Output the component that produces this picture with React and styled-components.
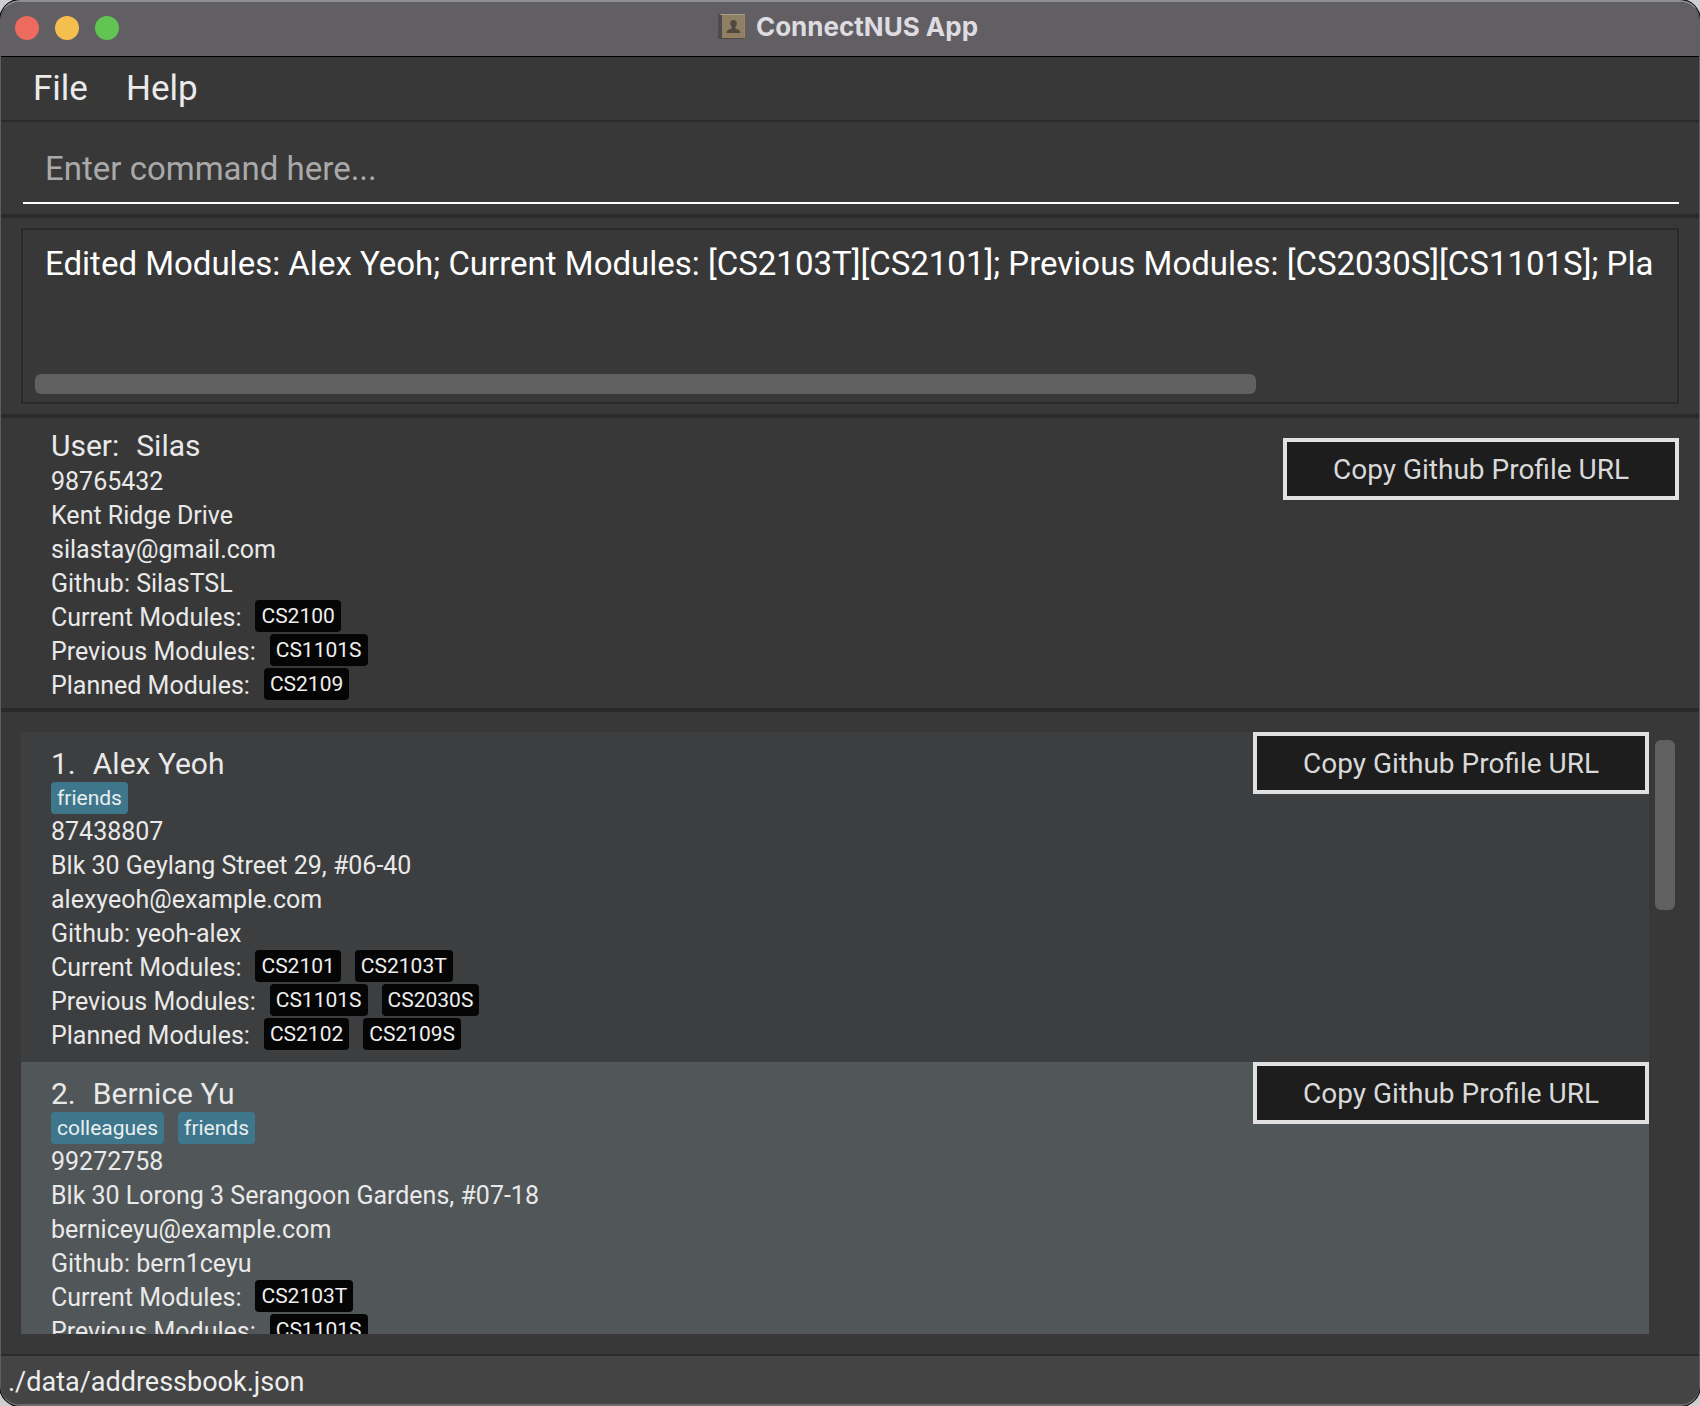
import React from "react";
import styled, { createGlobalStyle } from "styled-components";

const GlobalStyle = createGlobalStyle`
  *, *::before, *::after { box-sizing: border-box; }
  body {
    margin: 0;
    background: #cfcfcf;
    color: #e9e9e9;
    font-family: Roboto, "Liberation Sans", sans-serif;
  }
  button, input, textarea { font-family: inherit; margin: 0; }
`;

const Window = styled.div`
  display: flex;
  flex-direction: column;
  height: 100vh;
  overflow: hidden;
  background: #383838;
  border: 1px solid #5e5e5e;
  border-top: 2px solid #8f8e94;
  border-bottom: 2px solid #6c6c6c;
  border-radius: 20px;
  box-shadow: 0 0 0 1px #000;
`;

const TitleBar = styled.header`
  display: grid;
  grid-template-columns: 1fr auto 1fr;
  align-items: center;
  flex: none;
  height: 55px;
  padding: 0 14px 2px;
  background: #615f64;
  border-bottom: 1px solid #000;
`;

const Lights = styled.div`
  display: flex;
  gap: 16px;
`;

const Light = styled.button`
  width: 24px;
  height: 24px;
  padding: 0;
  border: 0;
  border-radius: 50%;
  background: ${(p) => p.$color};
`;

const Title = styled.h1`
  display: flex;
  align-items: center;
  gap: 10px;
  margin: 0;
  padding: 0 4px 2px 0;
  color: #dedce0;
  font: 700 26px/32px Inter, sans-serif;
`;

const MenuBar = styled.nav`
  display: flex;
  align-items: center;
  gap: 38px;
  flex: none;
  height: 65px;
  padding: 0 32px;
  border-bottom: 2px solid #2a2a2a;
`;

const MenuButton = styled.button`
  padding: 0;
  border: 0;
  background: none;
  color: #ebebeb;
  font-size: 35px;
  line-height: 42px;
`;

const CommandBox = styled.form`
  flex: none;
  padding: 0 20px 10px 22px;
  border-bottom: 4px solid #2a2a2a;
`;

const CommandInput = styled.input`
  display: block;
  width: 100%;
  height: 82px;
  padding: 12px 22px 0;
  border: 0;
  border-bottom: 2px solid #fff;
  border-radius: 0;
  outline: 0;
  background: none;
  color: #fff;
  font-size: 33px;
  &::placeholder { color: #a9a9a9; opacity: 1; }
`;

const ResultPane = styled.section`
  flex: none;
  padding: 10px 20px;
  border-bottom: 4px solid #2a2a2a;
`;

const ResultBox = styled.div`
  display: flex;
  flex-direction: column;
  height: 176px;
  border: 2px solid #2a2a2a;
`;

const ResultText = styled.textarea`
  flex: 1;
  width: 100%;
  min-height: 0;
  padding: 10px 0 0 22px;
  border: 0;
  outline: 0;
  resize: none;
  overflow: hidden;
  white-space: pre;
  background: none;
  color: #fff;
  font-size: 33px;
  line-height: 48px;
`;

const HorizontalTrack = styled.div`
  flex: none;
  height: 28px;
  padding: 0 14px 8px 12px;
`;

const VerticalTrack = styled.div`
  flex: none;
  width: 20px;
  padding: 8px 0;
`;

const Thumb = styled.div`
  width: ${(p) => p.$width || "100%"};
  height: ${(p) => p.$height || "100%"};
  border-radius: 6px;
  background: #606060;
`;

const UserPane = styled.section`
  display: flex;
  justify-content: space-between;
  align-items: flex-start;
  flex: none;
  padding: 0 20px 0 50px;
  border-bottom: 4px solid #2a2a2a;
  & > button { margin-top: 20px; }
`;

const Details = styled.div`
  min-width: 0;
  padding: ${(p) => p.$pad} 0;
`;

const Name = styled.h2`
  display: flex;
  gap: 17px;
  margin: 0;
  padding-top: 4px;
  font-weight: 400;
  font-size: 30px;
  line-height: 36px;
`;

const Line = styled.div`
  display: flex;
  gap: 14px;
  height: 34px;
  font-size: 25px;
  line-height: 36px;
  white-space: nowrap;
`;

const Tags = styled.div`
  display: flex;
  gap: 14px;
`;

const Tag = styled.span`
  height: 32px;
  padding: 0 6px;
  border-radius: 4px;
  background: #3e768b;
  color: #e9eef0;
  font-size: 21px;
  line-height: 33px;
`;

const ModuleTag = styled(Tag)`
  background: #050505;
  color: #efefef;
`;

const CopyButton = styled.button`
  flex: none;
  width: 396px;
  height: 62px;
  padding: 0;
  border: 4px solid #e1e1e1;
  border-radius: 0;
  background: #1d1d1d;
  color: #d9d9d9;
  font-size: 28px;
`;

const ListPane = styled.main`
  display: flex;
  gap: 6px;
  flex: 1;
  min-height: 0;
  padding: 20px 24px 20px 20px;
`;

const CardList = styled.ul`
  flex: 1;
  min-width: 0;
  margin: 0;
  padding: 0;
  overflow: hidden;
  list-style: none;
`;

const Card = styled.li`
  display: flex;
  justify-content: space-between;
  align-items: flex-start;
  padding-left: 30px;
  background: #3c3e3f;
  &:nth-child(even) { background: #515658; }
`;

const StatusBar = styled.footer`
  flex: none;
  height: 50px;
  padding: 4px 7px 0;
  border-top: 2px solid #2a2a2a;
  background: #444;
  color: #ededed;
  font-size: 27px;
  line-height: 44px;
`;

const user = {
  id: "User:",
  name: "Silas",
  lines: ["98765432", "Kent Ridge Drive", "silastay@gmail.com", "Github: SilasTSL"],
  modules: { Current: ["CS2100"], Previous: ["CS1101S"], Planned: ["CS2109"] },
};

const people = [
  {
    id: "1.",
    name: "Alex Yeoh",
    tags: ["friends"],
    lines: ["87438807", "Blk 30 Geylang Street 29, #06-40", "alexyeoh@example.com", "Github: yeoh-alex"],
    modules: {
      Current: ["CS2101", "CS2103T"],
      Previous: ["CS1101S", "CS2030S"],
      Planned: ["CS2102", "CS2109S"],
    },
  },
  {
    id: "2.",
    name: "Bernice Yu",
    tags: ["colleagues", "friends"],
    lines: ["99272758", "Blk 30 Lorong 3 Serangoon Gardens, #07-18", "berniceyu@example.com", "Github: bern1ceyu"],
    modules: { Current: ["CS2103T"], Previous: ["CS1101S"] },
  },
];

const result =
  "Edited Modules: Alex Yeoh; Current Modules: [CS2103T][CS2101]; Previous Modules: [CS2030S][CS1101S]; Pla";

function BookIcon() {
  return (
    <svg width="28" height="28" viewBox="0 0 28 28" aria-hidden="true">
      <rect x="0" y="1" width="27" height="25" rx="1" fill="#4e4b4c" />
      <rect x="4" y="1" width="23" height="24" fill="#8f7f65" />
      <rect x="2" y="1" width="25" height="1" fill="#a79d8c" />
      <rect x="26" y="2" width="1" height="23" fill="#a1845a" />
      <rect x="4" y="24" width="23" height="1" fill="#9d8055" />
      <path
        d="M15.500 7c2 0 3.300 1.400 3.300 3.400 0 1.500-.7 2.800-1.500 3.500v1.400c.3.900 4.900 1.100 5.200 4.700H8.500c.3-3.600 4.900-3.800 5.200-4.700v-1.400c-.8-.7-1.500-2-1.500-3.500C12.200 8.400 13.500 7 15.500 7z"
        fill="#51493f"
      />
    </svg>
  );
}

function PersonDetails({ person, pad }) {
  return (
    <Details $pad={pad}>
      <Name>
        <span>{person.id}</span>
        <span>{person.name}</span>
      </Name>
      {person.tags && (
        <Tags>
          {person.tags.map((tag) => (
            <Tag key={tag}>{tag}</Tag>
          ))}
        </Tags>
      )}
      {person.lines.map((line) => (
        <Line key={line}>{line}</Line>
      ))}
      {Object.entries(person.modules).map(([kind, codes]) => (
        <Line key={kind}>
          <span>{kind} Modules:</span>
          {codes.map((code) => (
            <ModuleTag key={code}>{code}</ModuleTag>
          ))}
        </Line>
      ))}
    </Details>
  );
}

export default function App() {
  return (
    <>
      <GlobalStyle />
      <Window>
        <TitleBar>
          <Lights>
            <Light $color="#ed6a5e" aria-label="Close" />
            <Light $color="#f5bf4f" aria-label="Minimise" />
            <Light $color="#61c554" aria-label="Zoom" />
          </Lights>
          <Title>
            <BookIcon />
            ConnectNUS App
          </Title>
        </TitleBar>
        <MenuBar>
          <MenuButton>File</MenuButton>
          <MenuButton>Help</MenuButton>
        </MenuBar>
        <CommandBox onSubmit={(e) => e.preventDefault()}>
          <CommandInput aria-label="Command" placeholder="Enter command here..." />
        </CommandBox>
        <ResultPane>
          <ResultBox>
            <ResultText aria-label="Result" readOnly wrap="off" value={result} />
            <HorizontalTrack>
              <Thumb $width="75%" />
            </HorizontalTrack>
          </ResultBox>
        </ResultPane>
        <UserPane>
          <PersonDetails person={user} pad="6px" />
          <CopyButton>Copy Github Profile URL</CopyButton>
        </UserPane>
        <ListPane>
          <CardList>
            {people.map((person) => (
              <Card key={person.id}>
                <PersonDetails person={person} pad="10px" />
                <CopyButton>Copy Github Profile URL</CopyButton>
              </Card>
            ))}
          </CardList>
          <VerticalTrack>
            <Thumb $height="29%" />
          </VerticalTrack>
        </ListPane>
        <StatusBar>./data/addressbook.json</StatusBar>
      </Window>
    </>
  );
}
